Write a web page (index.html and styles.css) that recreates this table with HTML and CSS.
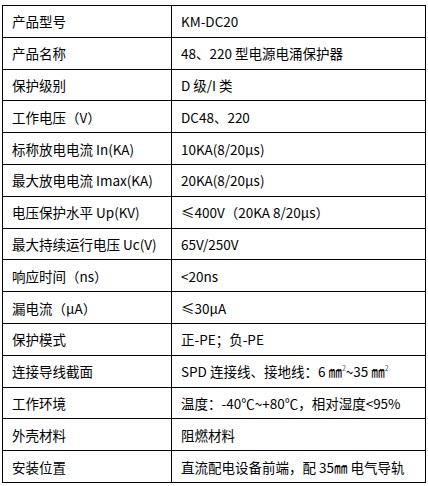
FILE: index.html
```html
<!DOCTYPE html>
<html lang="zh">
<head>
<meta charset="utf-8">
<title>KM-DC20 参数</title>
<link rel="stylesheet" href="styles.css">
</head>
<body>
<table class="spec">
  <tbody>
    <tr><td class="k">产品型号</td><td class="v">KM-DC20</td></tr>
    <tr><td class="k">产品名称</td><td class="v">48、220 型电源电涌保护器</td></tr>
    <tr><td class="k">保护级别</td><td class="v">D 级/I 类</td></tr>
    <tr><td class="k">工作电压（V）</td><td class="v">DC48、220</td></tr>
    <tr><td class="k">标称放电电流 In(KA)</td><td class="v">10KA(8/20μs)</td></tr>
    <tr><td class="k">最大放电电流 Imax(KA)</td><td class="v">20KA(8/20μs)</td></tr>
    <tr><td class="k">电压保护水平 Up(KV)</td><td class="v">≤400V（20KA 8/20μs）</td></tr>
    <tr><td class="k">最大持续运行电压 Uc(V)</td><td class="v">65V/250V</td></tr>
    <tr><td class="k">响应时间（ns）</td><td class="v">&lt;20ns</td></tr>
    <tr><td class="k">漏电流（μA）</td><td class="v">≤30μA</td></tr>
    <tr><td class="k">保护模式</td><td class="v">正-PE；负-PE</td></tr>
    <tr><td class="k">连接导线截面</td><td class="v">SPD 连接线、接地线：6 ㎜<sup class="sq">2</sup>~35 ㎜<sup class="sq">2</sup></td></tr>
    <tr><td class="k">工作环境</td><td class="v">温度：-40℃~+80℃，相对湿度&lt;95%</td></tr>
    <tr><td class="k">外壳材料</td><td class="v">阻燃材料</td></tr>
    <tr><td class="k">安装位置</td><td class="v">直流配电设备前端，配 35㎜ 电气导轨</td></tr>
  </tbody>
</table>
</body>
</html>
```

FILE: styles.css
```css
html, body {
  margin: 0;
  padding: 0;
  background: #ffffff;
}

body {
  padding: 5px 0 0 2px;
  font-family: "Noto Sans CJK SC", "Noto Sans", sans-serif;
  font-size: 13.5px;
  color: #000000;
}

.spec {
  border-collapse: collapse;
  width: 424px;
  table-layout: fixed;
}

.spec td {
  border: 1px solid #000000;
  height: 30.8px;
  padding: 0 0 0 9px;
  vertical-align: middle;
  line-height: 16px;
  white-space: nowrap;
  overflow: hidden;
}

.spec td.k {
  width: 159px;
}

.spec td.v {
  width: auto;
}

.sq {
  font-size: 7px;
  vertical-align: 6px;
  line-height: 0;
  color: #556;
}
```
